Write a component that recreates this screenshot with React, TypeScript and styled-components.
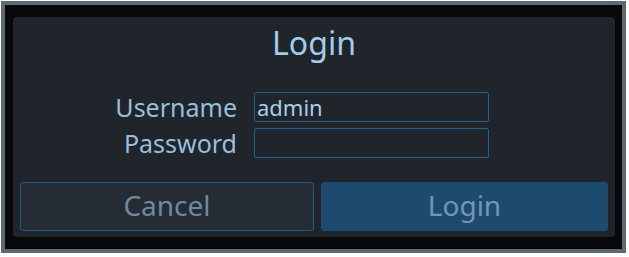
import { FC, useState } from "react";
import styled, { createGlobalStyle } from "styled-components";

const GlobalStyle = createGlobalStyle`
  body {
    margin: 0;
    background: #ffffff;
    font-family: "Noto Sans", "DejaVu Sans", sans-serif;
  }
  * {
    box-sizing: border-box;
  }
`;

const Frame = styled.div`
  width: 625px;
  height: 252px;
  margin: 1px;
  border: 4px solid #5b6a74;
  background: #07090b;
  padding: 12px 7px 12px 8px;
  display: flex;
`;

const Panel = styled.form`
  flex: 1;
  display: flex;
  flex-direction: column;
  background: #1f252b;
  border-radius: 4px;
  padding: 0 7px 6px 7px;
`;

const Title = styled.h1`
  margin: 4px 0 0 0;
  height: 42px;
  line-height: 44px;
  font-size: 32px;
  font-weight: 400;
  text-align: center;
  color: #a3cdea;
`;

const Fields = styled.div`
  margin-top: 29px;
  display: grid;
  grid-template-columns: 217px 235px;
  column-gap: 17px;
  row-gap: 6px;
`;

const Label = styled.label`
  text-align: right;
  font-size: 25px;
  line-height: 30px;
  color: #96bfdc;
`;

const Input = styled.input`
  height: 30px;
  width: 235px;
  padding: 0 2px;
  margin: 0;
  border: 1px solid #1f5f93;
  border-radius: 2px;
  background: transparent;
  color: #a8cde8;
  font-family: "Noto Sans", "DejaVu Sans", sans-serif;
  font-size: 22px;
  outline: none;
`;

const Actions = styled.div`
  margin-top: 24px;
  display: grid;
  grid-template-columns: 294fr 287fr;
  column-gap: 7px;
`;

const Button = styled.button<{ $primary?: boolean }>`
  height: 49px;
  border-radius: 3px;
  border: 1px solid ${(p) => (p.$primary ? "#1d4b6f" : "#1d5a8a")};
  background: ${(p) => (p.$primary ? "#1d4b6f" : "#252c33")};
  color: ${(p) => (p.$primary ? "#7397b1" : "#6d8aa0")};
  font-family: "Noto Sans", "DejaVu Sans", sans-serif;
  font-size: 28px;
  line-height: 40px;
  padding: 0 0 4px 0;
  cursor: pointer;
`;

const App: FC<{}> = () => {
  const [username, setUsername] = useState("admin");
  const [password, setPassword] = useState("");

  return (
    <>
      <GlobalStyle />
      <Frame>
        <Panel onSubmit={(e) => e.preventDefault()}>
          <Title>Login</Title>
          <Fields>
            <Label htmlFor="username">Username</Label>
            <Input
              id="username"
              value={username}
              onChange={(e) => setUsername(e.target.value)}
            />
            <Label htmlFor="password">Password</Label>
            <Input
              id="password"
              type="password"
              value={password}
              onChange={(e) => setPassword(e.target.value)}
            />
          </Fields>
          <Actions>
            <Button type="button">Cancel</Button>
            <Button $primary type="submit">
              Login
            </Button>
          </Actions>
        </Panel>
      </Frame>
    </>
  );
};

export default App;
